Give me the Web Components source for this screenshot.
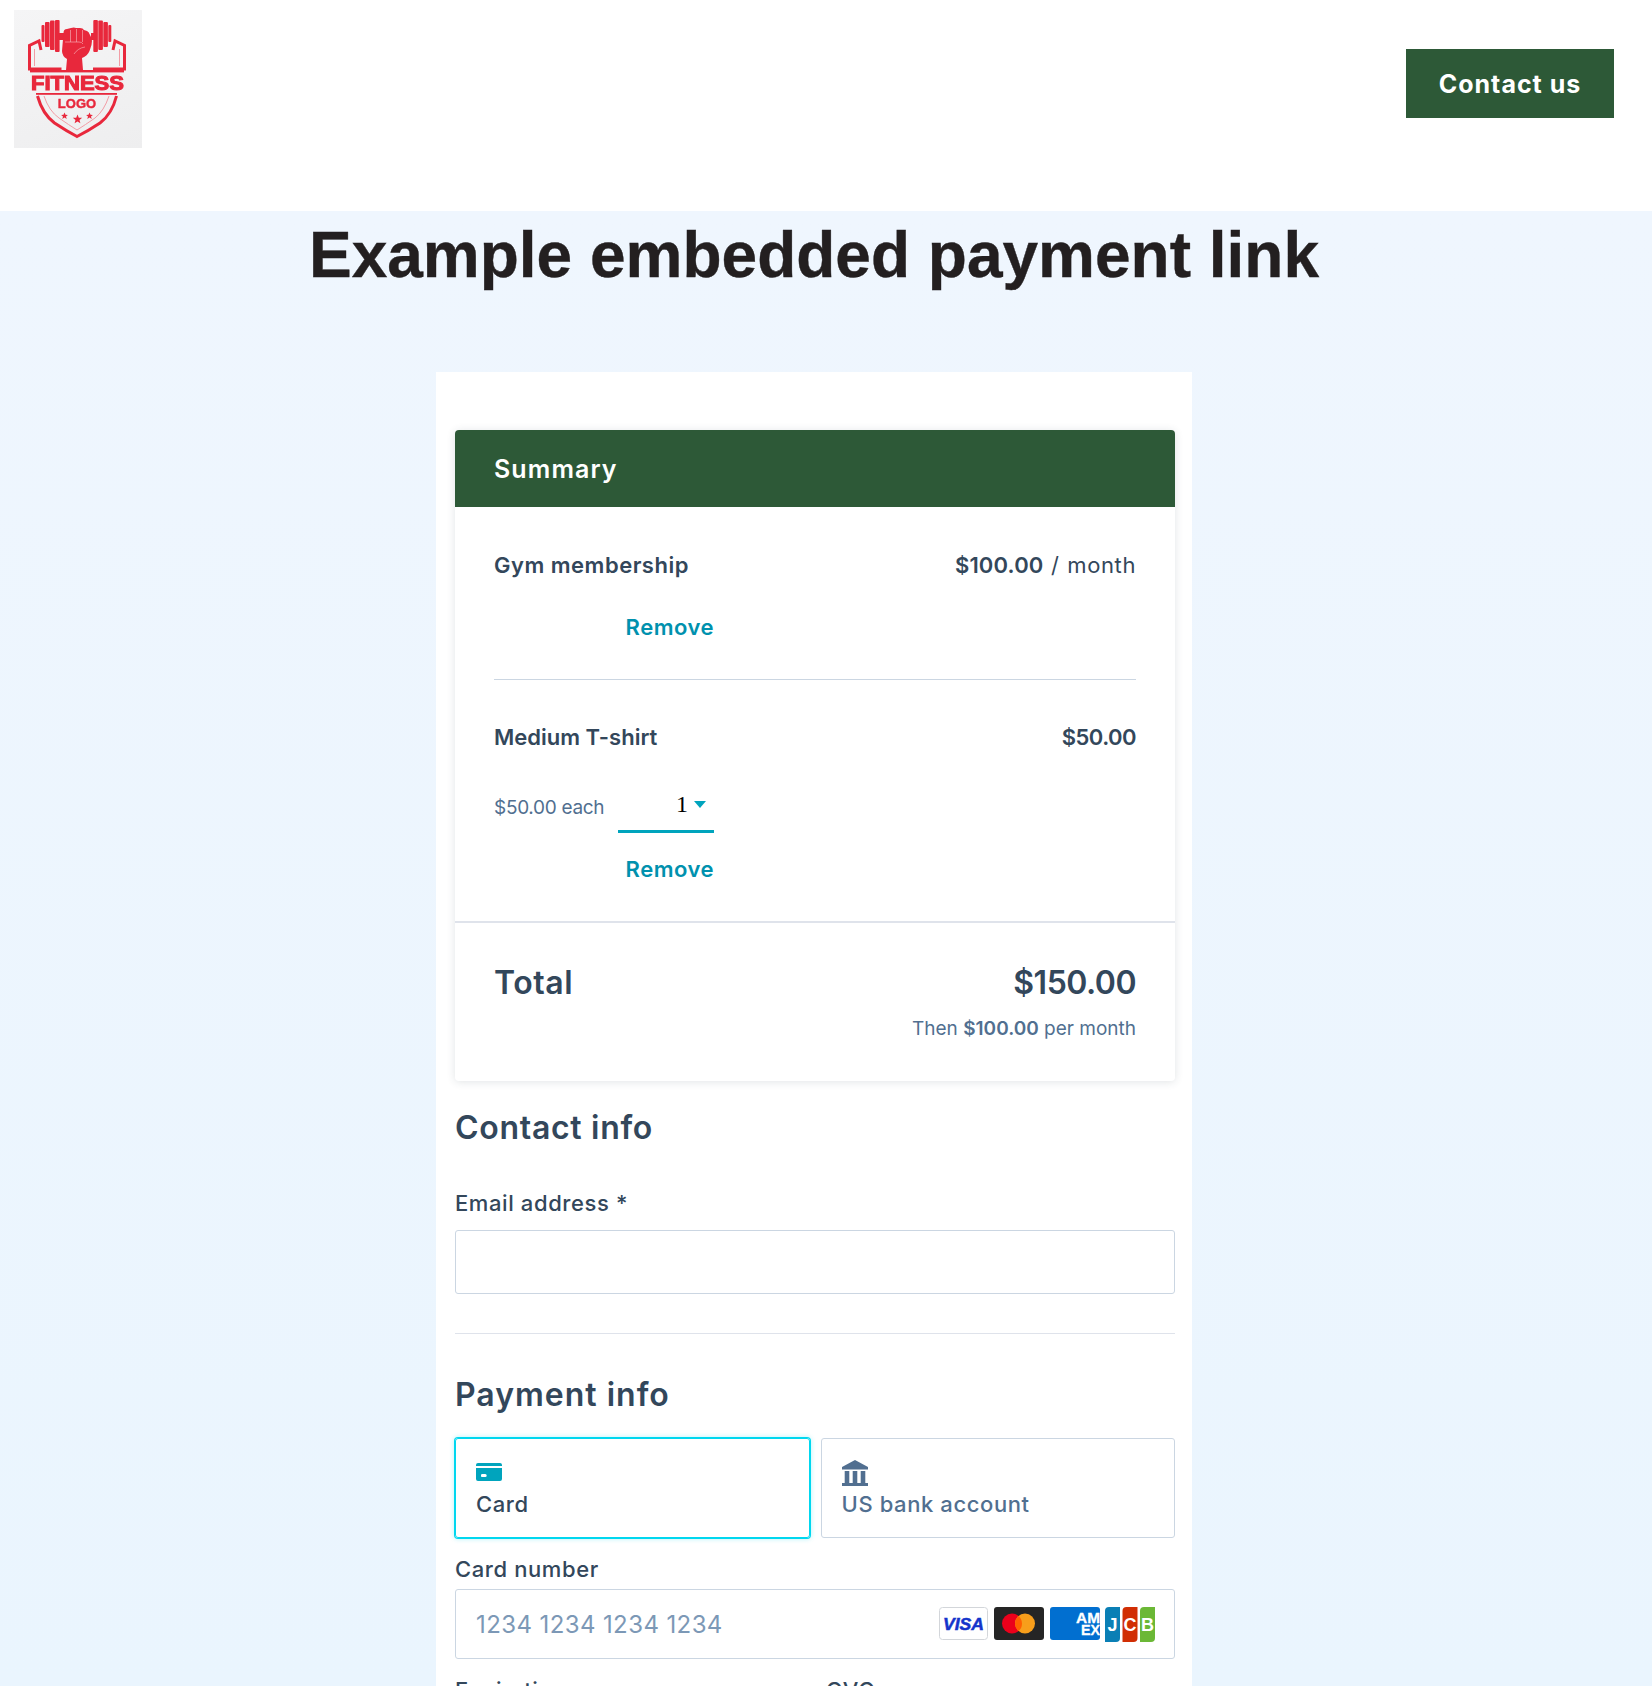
<!DOCTYPE html>
<html lang="en">
<head>
<meta charset="utf-8">
<title>Example embedded payment link</title>
<style>
    html, body { margin: 0; height: 1686px; overflow: hidden; background: #fff; }
    body { font-family: Inter, "Noto Sans", sans-serif; color: #33475b; }
</style>
</head>
<body>
<site-header>
    <fitness-logo></fitness-logo>
    <contact-button>Contact us</contact-button>
</site-header>
<page-main>
    <page-title>Example embedded payment link</page-title>
    <checkout-card>
        <order-summary>
            <line-item name="Gym membership" price="$100.00" suffix="/ month" style="--name-spacing:.5px;--price-spacing:.15px"></line-item>
            <line-item name="Medium T-shirt" price="$50.00" each="$50.00 each" style="--price-spacing:-.55px"></line-item>
            <order-total slot="total" amount="$150.00" then="$100.00"></order-total>
        </order-summary>
        <section-title style="margin-top:29px;--title-spacing:.7px">Contact info</section-title>
        <form-field style="margin-top:44px" label="Email address *"></form-field>
        <hr-line></hr-line>
        <section-title style="margin-top:43px;--title-spacing:1px">Payment info</section-title>
        <pay-tabs></pay-tabs>
        <form-field style="margin-top:18px" label="Card number" gap="7" height="70" placeholder="1234 1234 1234 1234">
            <card-brands></card-brands>
        </form-field>
        <field-row>
            <form-field label="Expiration" gap="7" height="70"></form-field>
            <form-field label="CVC" gap="7" height="70"></form-field>
        </field-row>
    </checkout-card>
</page-main>

<script>
class SiteHeader extends HTMLElement {
    constructor() {
        super();
        this.attachShadow({ mode: 'open' }).innerHTML = `
            <style>
                :host {
                    display: flex;
                    justify-content: space-between;
                    align-items: flex-start;
                    height: 211px;
                    box-sizing: border-box;
                    padding: 10px 38px 0 14px;
                    background: #fff;
                }
            </style>
            <slot></slot>`;
    }
}

class FitnessLogo extends HTMLElement {
    constructor() {
        super();
        this.attachShadow({ mode: 'open' }).innerHTML = `
            <style>
                :host { display: block; width: 128px; height: 138px; background: linear-gradient(160deg, #f5f5f6, #eeeeef); }
                svg { display: block; filter: blur(.4px); }
                text { font-family: "Liberation Sans", sans-serif; font-weight: 700; fill: #e8283c; }
            </style>
            <svg width="128" height="138" viewBox="14 10 128 138" fill="#e8283c">
                <!-- barbell -->
                <rect x="41.500" y="25" width="3" height="17" rx="1"/>
                <rect x="45" y="22" width="4.600" height="25" rx="1"/>
                <rect x="50" y="20.500" width="4.600" height="29.500" rx="1"/>
                <rect x="55" y="20" width="4.600" height="32" rx="1"/>
                <rect x="59" y="33" width="6" height="7"/>
                <rect x="91" y="33" width="3" height="7"/>
                <rect x="93.300" y="20" width="4.600" height="32" rx="1"/>
                <rect x="98.300" y="20.500" width="4.600" height="29.500" rx="1"/>
                <rect x="103.300" y="22" width="4.600" height="25" rx="1"/>
                <rect x="108.300" y="25" width="3" height="17" rx="1"/>
                <!-- fist -->
                <path d="M63.500 33q0-4 3.500-4l4-1q3-1 5 0l4 0q3 0 4 2l3 1q2 1 2.500 3l2 4q1 3 0 7l-2 6q-2 5-7.500 7l1 12h-17l1-11q-5-3-5-8z"/>
                <path d="M70.500 30v12M76.500 29v13M82.500 30v12M65 42h14q3 0 4 2M74 54q4-6 11-7" fill="none" stroke="#f7b9c0" stroke-width=".6"/>
                <!-- shield top -->
                <path d="M41 50l-2-9-9.500 4.500V69h32M113 50l2-9 9.500 4.500V69H93" fill="none" stroke="#e8283c" stroke-width="3"/>
                <path d="M34.500 49v17M119.500 49v17" fill="none" stroke="#f29ca5" stroke-width="1"/>
                <rect x="30" y="70" width="94" height="2.400"/>
                <text x="31" y="90" font-size="21" textLength="93" lengthAdjust="spacingAndGlyphs" stroke="#e8283c" stroke-width="1.100">FITNESS</text>
                <rect x="36" y="93" width="81" height="1.800"/>
                <!-- shield bottom -->
                <path d="M37.500 96q5 18 17 27q12 8 22.500 13.500q11-5.500 23-13.500q12-9 16.500-27" fill="none" stroke="#e8283c" stroke-width="3"/>
                <path d="M44 96q5 15 15 22q10 7 18 12q8-5 18-12q9-7 14-22" fill="none" stroke="#f29ca5" stroke-width="1"/>
                <text x="77" y="108" font-size="13" text-anchor="middle" stroke="#e8283c" stroke-width=".4">LOGO</text>
                <path d="M64.500 112.500l1 2.300 2.400.1-1.900 1.600.7 2.400-2.200-1.400-2.200 1.400.7-2.400-1.900-1.600 2.400-.1z"/>
                <path d="M77.500 114.500l1.300 3.200 3.400.1-2.700 2.200.9 3.300-2.900-1.900-2.900 1.900.9-3.300-2.700-2.200 3.400-.1z"/>
                <path d="M89.500 112.500l1 2.300 2.400.1-1.900 1.600.7 2.400-2.200-1.400-2.200 1.400.7-2.400-1.900-1.600 2.400-.1z"/>
            </svg>`;
    }
}

class ContactButton extends HTMLElement {
    constructor() {
        super();
        this.attachShadow({ mode: 'open' }).innerHTML = `
            <style>
                :host {
                    display: flex;
                    align-items: center;
                    justify-content: center;
                    width: 208px;
                    height: 69px;
                    margin-top: 39px;
                    background: #2d5937;
                    color: #fff;
                    font: 700 25px Inter, sans-serif;
                    letter-spacing: 1px;
                }
            </style>
            <slot></slot>`;
    }
}

class PageMain extends HTMLElement {
    constructor() {
        super();
        this.attachShadow({ mode: 'open' }).innerHTML = `
            <style>
                :host {
                    display: flex;
                    flex-direction: column;
                    align-items: center;
                    height: 1475px;
                    padding-right: 24px;
                    overflow: hidden;
                    background: linear-gradient(#eff6fe, #eaf5fe);
                }
            </style>
            <slot></slot>`;
    }
}

class PageTitle extends HTMLElement {
    constructor() {
        super();
        this.attachShadow({ mode: 'open' }).innerHTML = `
            <style>
                :host {
                    display: block;
                    margin: 7px 0 80px;
                    font: 700 64px/74px "Liberation Sans", Arial, sans-serif;
                    color: #231f20;
                    white-space: nowrap;
                    -webkit-text-stroke: .4px #231f20;
                }
            </style>
            <slot></slot>`;
    }
}

class CheckoutCard extends HTMLElement {
    constructor() {
        super();
        this.attachShadow({ mode: 'open' }).innerHTML = `
            <style>
                :host {
                    display: block;
                    width: 720px;
                    padding: 58px 17px 40px 19px;
                    background: #fff;
                }
            </style>
            <slot></slot>`;
    }
}

class OrderSummary extends HTMLElement {
    constructor() {
        super();
        this.attachShadow({ mode: 'open' }).innerHTML = `
            <style>
                :host {
                    display: block;
                    border-radius: 4px;
                    background: #fff;
                    box-shadow: 0 1px 8px rgba(45, 62, 80, .14);
                }
                header {
                    display: flex;
                    align-items: center;
                    height: 77px;
                    padding-left: 39px;
                    border-radius: 4px 4px 0 0;
                    background: #2d5937;
                    color: #fff;
                    font: 600 25px Inter, sans-serif;
                    letter-spacing: 1.1px;
                }
                .items { padding: 0 39px; }
                ::slotted(line-item:not(:last-of-type)) { border-bottom: 1px solid #cbd6e2; }
            </style>
            <header>Summary</header>
            <div class="items"><slot></slot></div>
            <slot name="total"></slot>`;
    }
}

class LineItem extends HTMLElement {
    constructor() {
        super();
        this.attachShadow({ mode: 'open' });
    }

    connectedCallback() {
        let suffix = this.getAttribute('suffix');
        let each = this.getAttribute('each');
        this.shadowRoot.innerHTML = `
            <style>
                :host {
                    display: block;
                    padding: ${each ? 42 : 43}px 0 37px;
                    font: 600 22px/30px Inter, sans-serif;
                    color: #33475b;
                }
                .row { display: flex; justify-content: space-between; }
                .name { letter-spacing: var(--name-spacing, 0); }
                .amount { letter-spacing: var(--price-spacing, 0); }
                .suffix { margin-left: 2px; font-weight: 400; letter-spacing: .6px; word-spacing: 1px; }
                .actions { display: flex; flex-direction: column; align-items: flex-end; width: 220px; }
                .price {
                    display: flex;
                    align-items: center;
                    justify-content: space-between;
                    align-self: stretch;
                    height: 50px;
                    margin-top: 31px;
                }
                .each { padding-bottom: 2px; font: 400 19px Inter, sans-serif; letter-spacing: -.3px; color: #516f90; }
                .select {
                    display: flex;
                    align-items: center;
                    justify-content: flex-end;
                    gap: 6px;
                    box-sizing: border-box;
                    width: 96px;
                    height: 50px;
                    padding: 0 8px 4px 0;
                    border-bottom: 3px solid #00a4bd;
                    font: 400 24px "Liberation Serif", serif;
                    color: #000;
                }
                .select i { width: 0; height: 0; border: 6px solid transparent; border-top: 7px solid #00a4bd; border-bottom: 0; }
                .remove { color: #0091ae; letter-spacing: .5px; margin-top: ${each ? 21 : 32}px; }
            </style>
            <div class="row">
                <span class="name">${this.getAttribute('name')}</span>
                <span><span class="amount">${this.getAttribute('price')}</span>${suffix ? ` <span class="suffix">${suffix}</span>` : ''}</span>
            </div>
            <div class="actions">
                ${each ? `<div class="price"><span class="each">${each}</span><span class="select">1<i></i></span></div>` : ''}
                <span class="remove">Remove</span>
            </div>`;
    }
}

class OrderTotal extends HTMLElement {
    constructor() {
        super();
        this.attachShadow({ mode: 'open' });
    }

    connectedCallback() {
        this.shadowRoot.innerHTML = `
            <style>
                :host {
                    display: block;
                    padding: 40px 39px 39px;
                    border-top: 2px solid #dfe3eb;
                    color: #33475b;
                }
                .row { display: flex; justify-content: space-between; font: 600 32px/40px Inter, sans-serif; }
                .row span:first-child { letter-spacing: .6px; }
                .row span:last-child { letter-spacing: -.5px; }
                .then { margin-top: 13px; text-align: right; font: 400 19px/26px Inter, sans-serif; color: #516f90; }
                b { font-weight: 600; }
            </style>
            <div class="row"><span>Total</span><span>${this.getAttribute('amount')}</span></div>
            <div class="then">Then <b>${this.getAttribute('then')}</b> per month</div>`;
    }
}

class SectionTitle extends HTMLElement {
    constructor() {
        super();
        this.attachShadow({ mode: 'open' }).innerHTML = `
            <style>
                :host {
                    display: block;
                    font: 600 32px/36px Inter, sans-serif;
                    letter-spacing: var(--title-spacing, 0);
                    color: #33475b;
                }
            </style>
            <slot></slot>`;
    }
}

class HrLine extends HTMLElement {
    constructor() {
        super();
        this.attachShadow({ mode: 'open' }).innerHTML = `
            <style>
                :host { display: block; height: 1px; margin-top: 39px; background: #dfe3eb; }
            </style>`;
    }
}

class FormField extends HTMLElement {
    constructor() {
        super();
        this.attachShadow({ mode: 'open' });
    }

    connectedCallback() {
        let placeholder = this.getAttribute('placeholder');
        this.shadowRoot.innerHTML = `
            <style>
                :host { display: block; color: #33475b; }
                label { display: block; font: 500 22px/26px Inter, sans-serif; letter-spacing: .6px; }
                .input {
                    display: flex;
                    align-items: center;
                    justify-content: space-between;
                    box-sizing: border-box;
                    height: ${this.getAttribute('height') || 64}px;
                    margin-top: ${this.getAttribute('gap') || 14}px;
                    padding: 0 19px 0 20px;
                    border: 1px solid #cbd6e2;
                    border-radius: 3px;
                    background: #fff;
                    font: 400 24px Inter, sans-serif;
                    letter-spacing: .4px;
                    color: #7c98b6;
                }
            </style>
            <label>${this.getAttribute('label')}</label>
            <div class="input"><span>${placeholder || ''}</span><slot></slot></div>`;
    }
}

class FieldRow extends HTMLElement {
    constructor() {
        super();
        this.attachShadow({ mode: 'open' }).innerHTML = `
            <style>
                :host { display: grid; grid-template-columns: 360px 1fr; gap: 11px; margin-top: 18px; }
            </style>
            <slot></slot>`;
    }
}

class PayTabs extends HTMLElement {
    constructor() {
        super();
        this.attachShadow({ mode: 'open' }).innerHTML = `
            <style>
                :host { display: grid; grid-template-columns: 1fr 1fr; gap: 11px; margin-top: 25px; }
                .tab {
                    box-sizing: border-box;
                    height: 100px;
                    padding: 21px 20px 0;
                    border: 1px solid #cbd6e2;
                    border-radius: 3px;
                    font: 500 22px/26px Inter, sans-serif;
                    letter-spacing: .6px;
                    color: #516f90;
                }
                .tab.on {
                    border-color: #00d7ef;
                    box-shadow: 0 0 0 1px #00d7ef, 0 0 5px 1px rgba(0, 215, 239, .3);
                    color: #33475b;
                }
                svg { display: block; margin-bottom: 5px; }
            </style>
            <div class="tab on">
                <svg width="26" height="26" viewBox="0 0 26 26" fill="#00a4bd">
                    <path d="M2 3h22a2 2 0 0 1 2 2v1H0V5a2 2 0 0 1 2-2zM0 8h26v11a2 2 0 0 1-2 2H2a2 2 0 0 1-2-2zm5 7.500a1.200 1.200 0 0 0 1.200 1.500h3a1.200 1.200 0 0 0 0-3h-3A1.200 1.200 0 0 0 5 15.500z" fill-rule="evenodd"/>
                </svg>
                Card
            </div>
            <div class="tab">
                <svg width="26" height="26" viewBox="0 0 26 26" fill="#516f90">
                    <path d="M13 0L26 7V9.500H0V7zM2.700 11h4.600v12H2.700zM10.700 11h4.600v12h-4.600zM18.700 11h4.600v12h-4.600zM0 23h26v3H0z"/>
                </svg>
                US bank account
            </div>`;
    }
}

class CardBrands extends HTMLElement {
    constructor() {
        super();
        this.attachShadow({ mode: 'open' }).innerHTML = `
            <style>
                :host { display: flex; gap: 6px; letter-spacing: 0; }
                svg { display: block; }
                text { font-family: "Liberation Sans", sans-serif; font-weight: 700; }
            </style>
            <svg width="49" height="33" viewBox="0 0 49 33">
                <rect x=".5" y=".5" width="48" height="32" rx="3" fill="#fff" stroke="#d3d6da"/>
                <text x="4" y="23" font-size="17" font-style="italic" fill="#1434cb" stroke="#1434cb" stroke-width=".5" textLength="41" lengthAdjust="spacingAndGlyphs">VISA</text>
            </svg>
            <svg width="50" height="33" viewBox="0 0 50 33">
                <rect width="50" height="33" rx="3" fill="#252525"/>
                <circle cx="18" cy="16.500" r="10" fill="#eb001b"/>
                <circle cx="31" cy="16.500" r="10" fill="#f79e1b"/>
                <path d="M24.500 8.900a10 10 0 0 1 0 15.200a10 10 0 0 1 0-15.200z" fill="#ff5f00"/>
            </svg>
            <svg width="50" height="33" viewBox="0 0 50 33">
                <rect width="50" height="33" rx="3" fill="#016fd0"/>
                <text x="26" y="16" font-size="14" fill="#fff" stroke="#fff" stroke-width=".3" textLength="24" lengthAdjust="spacingAndGlyphs">AM</text>
                <text x="31" y="27.500" font-size="14" fill="#fff" stroke="#fff" stroke-width=".3" textLength="19" lengthAdjust="spacingAndGlyphs">EX</text>
            </svg>
            <svg width="50" height="35" viewBox="0 0 50 35" style="margin-left:-1px">
                <path d="M4 0h11v31a4 4 0 0 1-4 4H0V4a4 4 0 0 1 4-4z" fill="#0a7fb5"/>
                <path d="M21.500 0h11v31a4 4 0 0 1-4 4h-11V4a4 4 0 0 1 4-4z" fill="#d12e04"/>
                <path d="M39 0h11v31a4 4 0 0 1-4 4H35V4a4 4 0 0 1 4-4z" fill="#6bb836"/>
                <text x="7.500" y="24" font-size="18" fill="#fff" text-anchor="middle">J</text>
                <text x="25" y="24" font-size="18" fill="#fff" text-anchor="middle">C</text>
                <text x="42.500" y="24" font-size="18" fill="#fff" text-anchor="middle">B</text>
            </svg>`;
    }
}

customElements.define('site-header', SiteHeader);
customElements.define('fitness-logo', FitnessLogo);
customElements.define('contact-button', ContactButton);
customElements.define('page-main', PageMain);
customElements.define('page-title', PageTitle);
customElements.define('checkout-card', CheckoutCard);
customElements.define('order-summary', OrderSummary);
customElements.define('line-item', LineItem);
customElements.define('order-total', OrderTotal);
customElements.define('section-title', SectionTitle);
customElements.define('hr-line', HrLine);
customElements.define('form-field', FormField);
customElements.define('field-row', FieldRow);
customElements.define('pay-tabs', PayTabs);
customElements.define('card-brands', CardBrands);
</script>
</body>
</html>
